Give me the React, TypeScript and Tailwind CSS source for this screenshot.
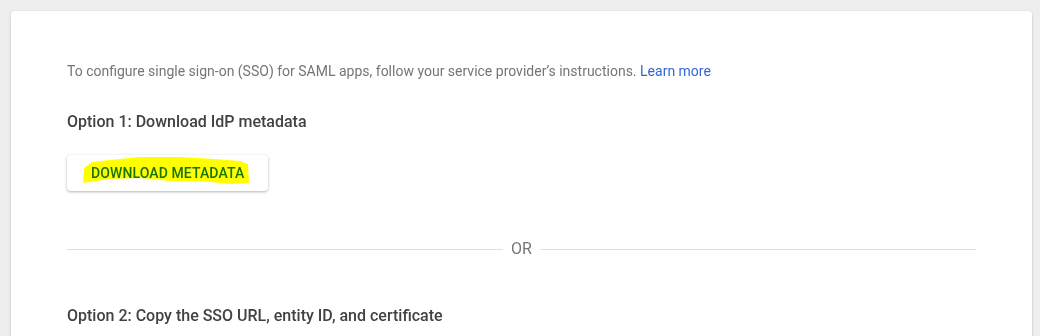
import { Fragment } from 'react';

const font = { fontFamily: 'Roboto, "Liberation Sans", sans-serif' };

const Highlight = () => (
  <svg
    className="pointer-events-none absolute left-[13px] top-[-1px] mix-blend-multiply"
    width="172"
    height="34"
    viewBox="0 0 172 34"
  >
    <path
      d="M3 29 L4 14 L12 8 L30 6 L60 3 L100 3 L135 5 L160 7 L168 10 L169 29 L150 30 L120 27 L90 27 L60 24 L30 25 L10 28 Z"
      fill="#ffff00"
    />
  </svg>
);

export default function App() {
  return (
    <Fragment>
      <div className="min-h-[336px] bg-[#eeeeee] pt-[11px] pl-[11px] pr-[8px]" style={font}>
        <div className="min-h-[340px] rounded-[4px] bg-white px-14 pt-[50px] shadow-[0_1px_3px_rgba(0,0,0,0.2)]">
          <p className="text-sm leading-5 text-[#757575]">
            To configure single sign-on (SSO) for SAML apps, follow your service provider’s instructions.{' '}
            <a className="text-[#3367d6]" href="#">Learn more</a>
          </p>

          <h2 className="mt-[29px] text-base font-medium leading-6 text-[#424242]">Option 1: Download IdP metadata</h2>

          <div className="mt-[21px]">
            <button
              type="button"
              className="relative h-9 rounded-[4px] bg-white px-6 text-sm font-medium tracking-[0.1px] text-[#1a73e8] shadow-[0_1px_3px_rgba(0,0,0,0.3)]"
            >
              DOWNLOAD METADATA
              <Highlight />
            </button>
          </div>

          <div className="mt-[48px] flex items-center gap-2">
            <div className="h-px flex-1 bg-[#e0e0e0]" />
            <span className="text-base leading-5 text-[#757575]">OR</span>
            <div className="h-px flex-1 bg-[#e0e0e0]" />
          </div>

          <h2 className="mt-[45px] text-base font-medium leading-6 text-[#424242]">
            Option 2: Copy the SSO URL, entity ID, and certificate
          </h2>
        </div>
      </div>
    </Fragment>
  );
}
